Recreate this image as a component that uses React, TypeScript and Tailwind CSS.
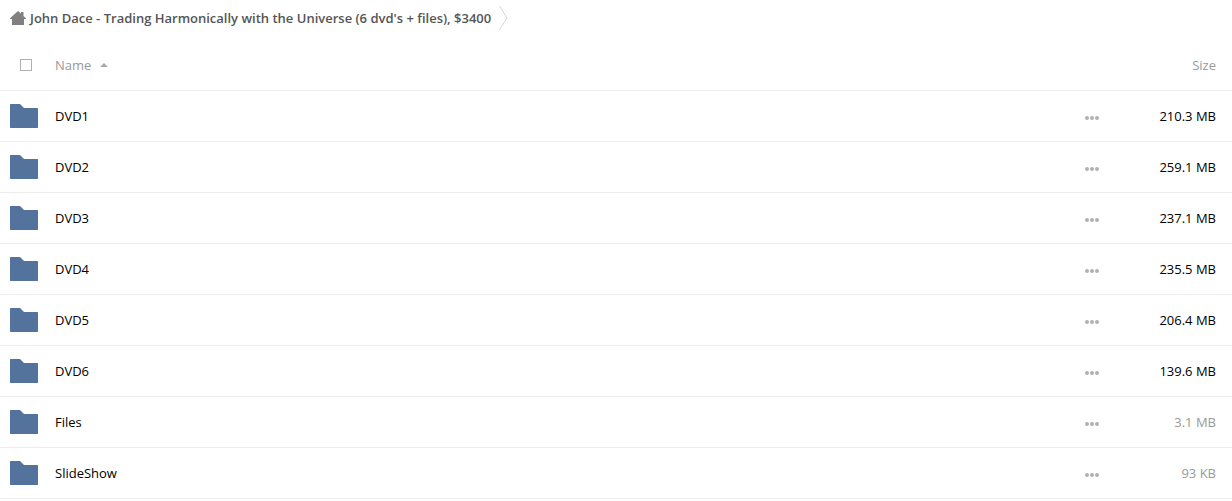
const folders = [
  { name: 'DVD1', size: '210.3 MB', muted: false },
  { name: 'DVD2', size: '259.1 MB', muted: false },
  { name: 'DVD3', size: '237.1 MB', muted: false },
  { name: 'DVD4', size: '235.5 MB', muted: false },
  { name: 'DVD5', size: '206.4 MB', muted: false },
  { name: 'DVD6', size: '139.6 MB', muted: false },
  { name: 'Files', size: '3.1 MB', muted: true },
  { name: 'SlideShow', size: '93 KB', muted: true },
];

function HomeIcon() {
  return (
    <svg aria-hidden="true" width="16" height="14" viewBox="0 0 16 14" fill="#808080">
      <path d="M8 0 0 7.300V8h2v6h12V8h2v-.7L13.500 5V1H11v1.700z" />
    </svg>
  );
}

function FolderIcon() {
  return (
    <svg aria-hidden="true" width="28" height="24" viewBox="0 0 28 24" fill="#54739c">
      <path d="M.5 0H10l4 4h13.500l.5.500v19l-.5.500H.5l-.5-.5V.5z" />
    </svg>
  );
}

function MoreIcon() {
  return (
    <svg aria-hidden="true" width="14" height="4" viewBox="0 0 14 4" fill="#b0b0b0">
      <circle cx="2" cy="2" r="2" />
      <circle cx="7" cy="2" r="2" />
      <circle cx="12" cy="2" r="2" />
    </svg>
  );
}

export default function App() {
  return (
    <main className="bg-white font-['Open_Sans',sans-serif] text-[13px] leading-5 text-black">
      <nav aria-label="Breadcrumb" className="flex h-9 items-center pl-2.5">
        <a href="#" className="flex items-center gap-1 font-semibold text-[#555]">
          <HomeIcon />
          John Dace - Trading Harmonically with the Universe (6 dvd's + files), $3400
        </a>
        <svg aria-hidden="true" className="ml-2" width="9" height="24" viewBox="0 0 9 24" fill="none" stroke="#d4d4d4">
          <path d="M.5 0 8 12 .5 24" />
        </svg>
      </nav>
      <table className="mt-1 w-full table-fixed border-collapse">
        <thead>
          <tr className="h-[50px] border-b border-[#eee] text-[#999]">
            <th className="w-[55px] pl-5 text-left">
              <input type="checkbox" aria-label="Select all" className="block size-3 appearance-none border border-[#b0b0b0] bg-white" />
            </th>
            <th className="text-left font-normal" aria-sort="ascending">
              <button type="button" className="flex items-center gap-[9px]">
                Name
                <svg aria-hidden="true" width="8" height="4" viewBox="0 0 8 4" fill="#aaa">
                  <path d="M4 0 8 4H0z" />
                </svg>
              </button>
            </th>
            <th className="w-12" />
            <th className="w-[116px] pr-4 text-right font-normal">Size</th>
          </tr>
        </thead>
        <tbody>
          {folders.map((folder) => (
            <tr key={folder.name} className="h-[51px] border-b border-[#eee]">
              <td className="pl-2.5"><FolderIcon /></td>
              <td><a href="#">{folder.name}</a></td>
              <td>
                <button type="button" aria-label={`Actions for ${folder.name}`} className="mx-auto block px-2 pt-3 pb-2"><MoreIcon /></button>
              </td>
              <td className={folder.muted ? 'pr-4 text-right text-[#999]' : 'pr-4 text-right'}>{folder.size}</td>
            </tr>
          ))}
        </tbody>
      </table>
    </main>
  );
}
